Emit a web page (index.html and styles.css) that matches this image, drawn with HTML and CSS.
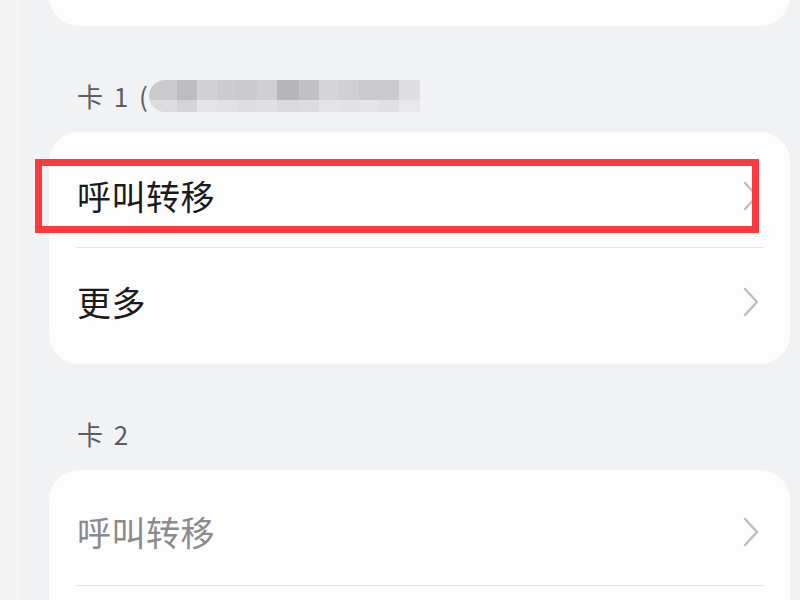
FILE: index.html
```html
<!DOCTYPE html>
<html lang="zh-CN">
<head>
<meta charset="utf-8">
<title>呼叫转移</title>
<link rel="stylesheet" href="styles.css">
</head>
<body>
<div class="page">
  <div class="strip"></div>
  <div class="main">
    <div class="card top-card"></div>

    <div class="section-label">
      <span>卡 1 (</span>
      <div class="masked">
        <div class="mask-row mask-top"></div>
        <div class="mask-row mask-bottom"></div>
      </div>
    </div>
    <div class="card">
      <div class="row highlighted">
        <span class="row-text">呼叫转移</span>
        <svg class="chev" viewBox="0 0 16 30" width="16" height="30"><path d="M2 2 L14 15 L2 28" /></svg>
        <div class="mark"></div>
      </div>
      <div class="sep"></div>
      <div class="row">
        <span class="row-text">更多</span>
        <svg class="chev" viewBox="0 0 16 30" width="16" height="30"><path d="M2 2 L14 15 L2 28" /></svg>
      </div>
    </div>

    <div class="section-label"><span>卡 2</span></div>
    <div class="card">
      <div class="row">
        <span class="row-text disabled">呼叫转移</span>
        <svg class="chev" viewBox="0 0 16 30" width="16" height="30"><path d="M2 2 L14 15 L2 28" /></svg>
      </div>
      <div class="sep"></div>
      <div class="row"></div>
    </div>
  </div>
</div>
</body>
</html>
```

FILE: styles.css
```css
html, body {
  margin: 0;
  padding: 0;
  background: #f1f2f4;
}
body {
  font-family: "Noto Sans CJK SC", "Noto Sans", sans-serif;
}
.page {
  display: flex;
  width: 800px;
  height: 600px;
  overflow: hidden;
}
.strip {
  width: 22px;
  flex: none;
  background: #f4f4f5;
}
.main {
  flex: 1;
  padding: 0 10px 0 27px;
  overflow: hidden;
}
.card {
  background: #fdfdfd;
  border-radius: 30px;
  padding: 8px 0 9px;
}
.top-card {
  height: 46px;
  padding: 0;
  margin-top: -20px;
  border-radius: 0 0 30px 30px;
}
.section-label {
  height: 106px;
  box-sizing: border-box;
  padding: 0 0 21px 28px;
  display: flex;
  align-items: flex-end;
  font-size: 26px;
  line-height: 30px;
  color: #5d5d5f;
  letter-spacing: 1.5px;
  word-spacing: 2px;
}
.masked {
  width: 271px;
  height: 32px;
  margin: 0 0 -1px 0;
  border-radius: 16px 0 0 16px;
  overflow: hidden;
  display: flex;
  flex-direction: column;
}
.mask-row {
  background-repeat: no-repeat;
}
.mask-top {
  height: 20px;
  background-image: linear-gradient(to right,
    #cbcbcd 0 28px, #bdbdbf 28px 48px, #d3d3d5 48px 68px, #cdcdcf 68px 88px,
    #cbcbcd 88px 108px, #cfcfd1 108px 128px, #b6b6b8 128px 150px, #c1c1c3 150px 170px,
    #d4d4d6 170px 190px, #d0d0d2 190px 210px, #cacacc 210px 230px, #cbcbcd 230px 250px,
    #dedee0 250px 271px);
}
.mask-bottom {
  height: 12px;
  background-image: linear-gradient(to right,
    #dcdcde 0 28px, #d4d4d6 28px 48px, #e4e4e6 48px 68px, #e2e2e4 68px 88px,
    #dedee0 88px 108px, #e0e0e2 108px 128px, #dadadc 128px 150px, #dcdcde 150px 170px,
    #e4e4e6 170px 190px, #e2e2e4 190px 210px, #e4e4e6 210px 230px, #e0e0e2 230px 250px,
    #e8e8ea 250px 271px);
}
.row {
  position: relative;
  height: 107px;
  box-sizing: border-box;
  padding: 0 31px 0 28px;
  display: flex;
  align-items: center;
  justify-content: space-between;
}
.row.highlighted {
  padding-top: 4px;
}
.row-text {
  font-size: 34px;
  line-height: 40px;
  color: #1b1b1c;
  letter-spacing: 0.5px;
}
.row-text.disabled {
  color: #8b8b8d;
}
.chev {
  display: block;
  flex: none;
}
.chev path {
  fill: none;
  stroke: #bdbdbf;
  stroke-width: 2.4;
  stroke-linecap: round;
  stroke-linejoin: round;
}
.sep {
  height: 1px;
  background: #e4e4e6;
  margin: 0 26px 0 27px;
}
.mark {
  position: absolute;
  left: -14px;
  top: 19px;
  width: 724px;
  height: 74px;
  box-sizing: border-box;
  border: 7px solid #fc3a3e;
}
```
